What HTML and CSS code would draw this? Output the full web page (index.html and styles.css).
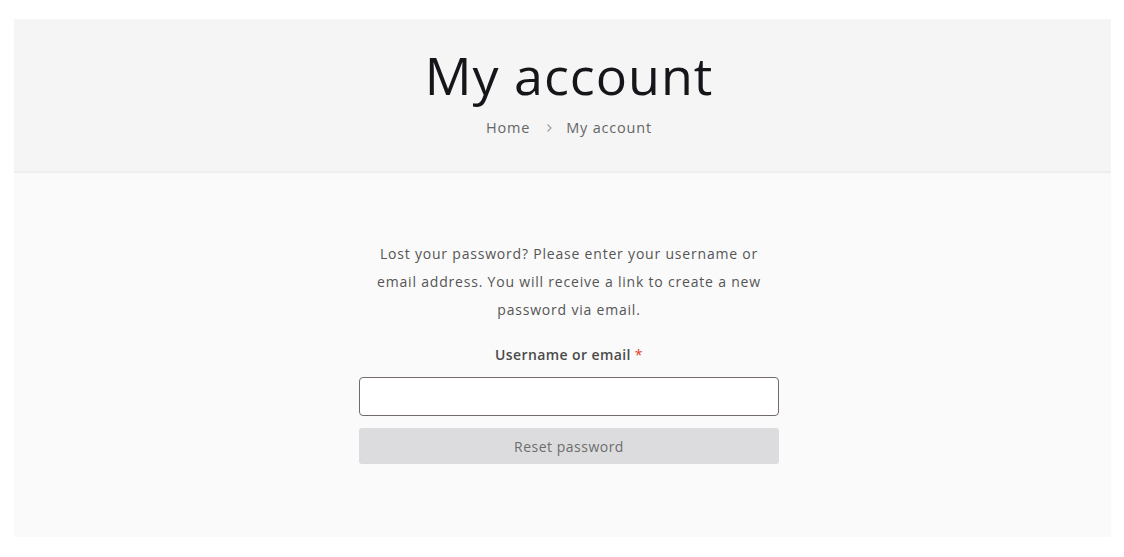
FILE: index.html
```html
<!DOCTYPE html>
<html lang="en">
<head>
<meta charset="utf-8">
<title>My account</title>
<link rel="stylesheet" href="styles.css">
</head>
<body>
<div class="page">
  <header class="page-header">
    <h1 class="page-title">My account</h1>
    <nav class="breadcrumb">
      <a class="crumb" href="#">Home</a>
      <span class="sep"><svg width="8" height="10" viewBox="0 0 8 10"><path d="M2.5 1.5 L6 5 L2.5 8.5" fill="none" stroke="#9a9a9a" stroke-width="1.1"/></svg></span>
      <span class="crumb current">My account</span>
    </nav>
  </header>
  <main class="content">
    <form class="lost-form">
      <p class="intro">Lost your password? Please enter your username or email address. You will receive a link to create a new password via email.</p>
      <label class="field-label" for="user">Username or email <span class="req">*</span></label>
      <input class="field-input" id="user" type="text">
      <button class="reset-btn" type="button">Reset password</button>
    </form>
  </main>
</div>
</body>
</html>
```
FILE: styles.css
```css
html, body {
  margin: 0;
  background: #ffffff;
}
body {
  padding: 19px 13px 20px 14px;
  font-family: "Open Sans", "Liberation Sans", sans-serif;
}
.page {
  width: 1097px;
}
.page-header {
  background: #f5f5f5;
  border-bottom: 2px solid #eeeeee;
  padding: 25px 0 32px 13px;
  text-align: center;
  height: 95px;
}
.page-title {
  margin: 0;
  font-size: 52px;
  line-height: 62px;
  font-weight: 400;
  color: #16161a;
  letter-spacing: 1px;
}
.breadcrumb {
  margin-top: 11px;
  display: flex;
  justify-content: center;
  align-items: center;
  font-size: 14.5px;
  line-height: 21px;
  letter-spacing: 0.8px;
  color: #666;
}
.crumb {
  color: #666;
  text-decoration: none;
}
.sep {
  display: inline-flex;
  margin: 0 13px 0 15px;
}
.content {
  background: #fafafa;
  padding: 67px 0 73px 13px;
  display: flex;
  justify-content: center;
}
.lost-form {
  width: 420px;
  display: flex;
  flex-direction: column;
  align-items: stretch;
  text-align: center;
}
.intro {
  margin: 0;
  font-size: 14px;
  line-height: 28px;
  letter-spacing: 0.8px;
  color: #555;
}
.field-label {
  margin-top: 20px;
  font-size: 14px;
  line-height: 21px;
  font-weight: 600;
  letter-spacing: 0.4px;
  color: #4a4a4a;
}
.req {
  color: #e2401c;
  font-weight: 400;
}
.field-input {
  margin-top: 12px;
  height: 39px;
  box-sizing: border-box;
  border: 1px solid #736b6b;
  border-radius: 4px;
  background: #fff;
  padding: 0 10px;
  font: inherit;
}
.reset-btn {
  margin-top: 12px;
  height: 36px;
  border: none;
  border-radius: 3px;
  background: #dcdcde;
  color: #6d6d6d;
  font-family: inherit;
  font-size: 14px;
  letter-spacing: 0.5px;
}
```
